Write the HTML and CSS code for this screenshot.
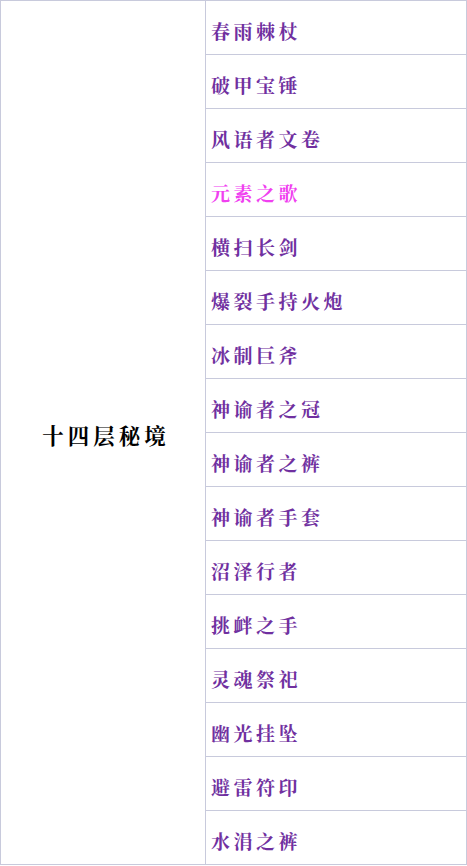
FILE: index.html
```html
<!DOCTYPE html>
<html lang="zh-CN">
<head>
    <meta charset="UTF-8">
    <meta name="viewport" content="width=device-width, initial-scale=1.0">
    <title>十四层秘境</title>
    <link rel="stylesheet" href="styles.css">
</head>
<body>
    <table class="drops">
        <tr>
            <td class="floor" rowspan="16">十四层秘境</td>
            <td class="item">春雨棘杖</td>
        </tr>
        <tr><td class="item">破甲宝锤</td></tr>
        <tr><td class="item">风语者文卷</td></tr>
        <tr><td class="item item-hot">元素之歌</td></tr>
        <tr><td class="item">横扫长剑</td></tr>
        <tr><td class="item">爆裂手持火炮</td></tr>
        <tr><td class="item">冰制巨斧</td></tr>
        <tr><td class="item">神谕者之冠</td></tr>
        <tr><td class="item">神谕者之裤</td></tr>
        <tr><td class="item">神谕者手套</td></tr>
        <tr><td class="item">沼泽行者</td></tr>
        <tr><td class="item">挑衅之手</td></tr>
        <tr><td class="item">灵魂祭祀</td></tr>
        <tr><td class="item">幽光挂坠</td></tr>
        <tr><td class="item">避雷符印</td></tr>
        <tr><td class="item">水涓之裤</td></tr>
    </table>
</body>
</html>
```

FILE: styles.css
```css
body {
    margin: 0;
    background-color: #ffffff;
    font-family: "Noto Serif CJK SC", "Noto Sans CJK SC", serif;
}

.drops {
    width: 467px;
    border-collapse: collapse;
    border: 1px solid #c8cadc;
}

.drops td {
    border: 1px solid #c8cadc;
    padding: 0;
}

.floor {
    width: 198px;
    padding: 4px 0 0 6px !important;
    text-align: center;
    font-size: 21.5px;
    font-weight: bold;
    letter-spacing: 4px;
    color: #000000;
}

.item {
    height: 54px;
    padding: 5px 0 0 5px !important;
    box-sizing: border-box;
    font-size: 19px;
    font-weight: bold;
    letter-spacing: 3.5px;
    color: #7030a0;
}

.item-hot {
    color: #f040f0;
}
```
